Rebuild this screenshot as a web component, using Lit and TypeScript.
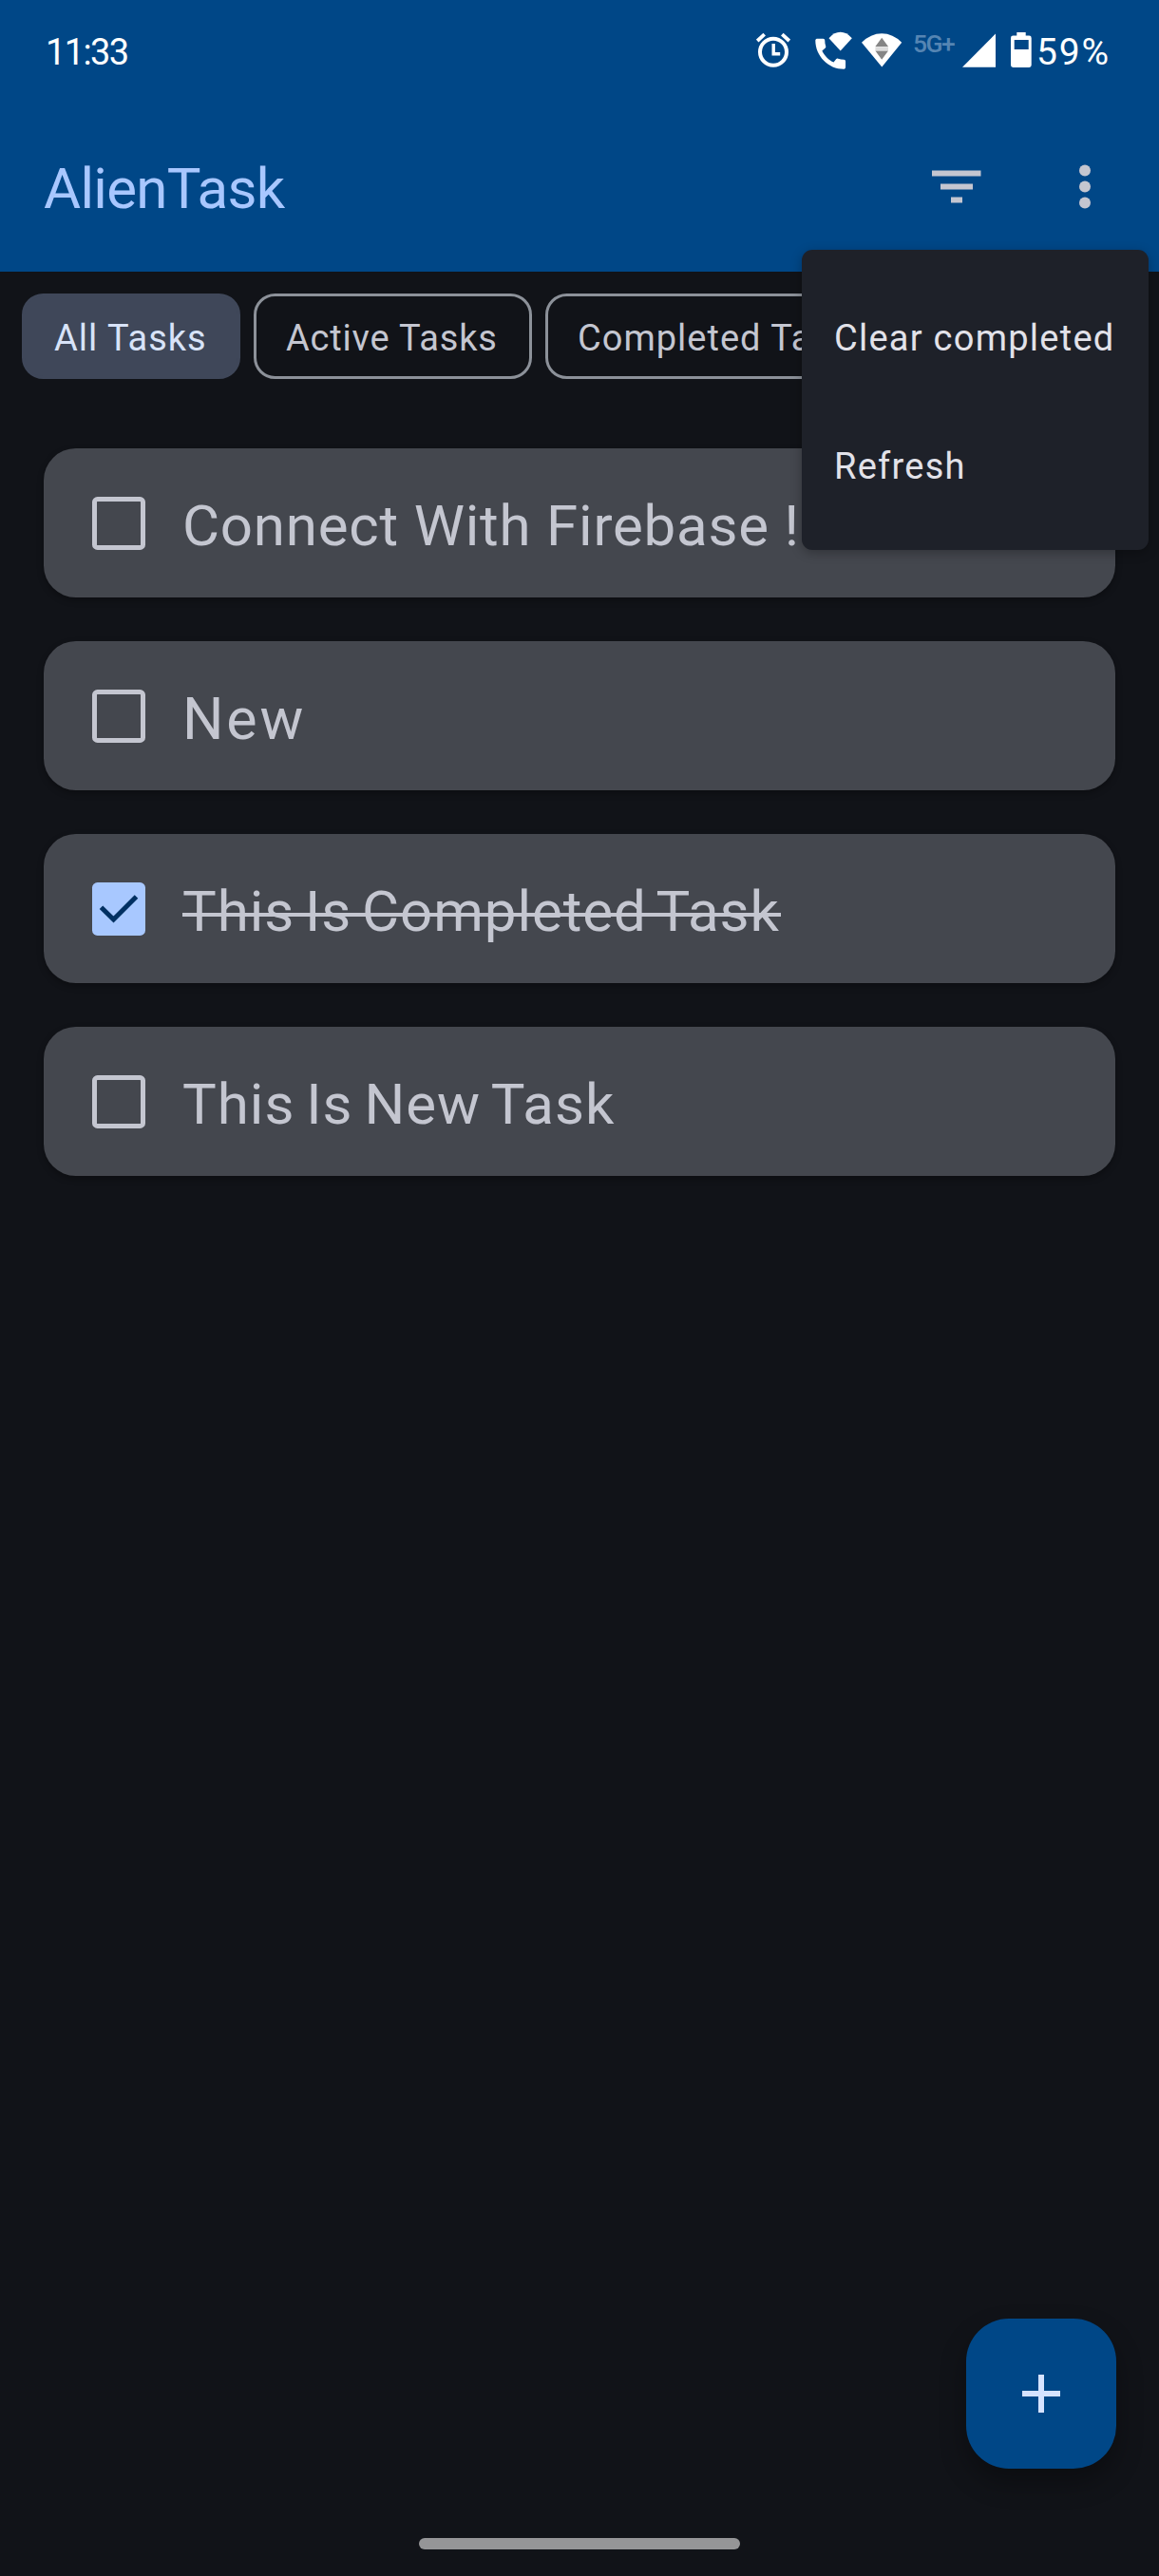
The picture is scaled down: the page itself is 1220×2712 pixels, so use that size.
import { LitElement, html, css, svg, nothing } from "lit";
import { customElement, property, state } from "lit/decorators.js";
import { classMap } from "lit/directives/class-map.js";

interface Task {
  title: string;
  done: boolean;
  tone: string;
}

@customElement("status-bar")
export class StatusBar extends LitElement {
  static styles = css`
    :host {
      display: flex;
      align-items: flex-start;
      height: 110px;
      box-sizing: border-box;
      padding: 33px 52px 0 48px;
      color: #fff;
    }
    .time {
      flex: 1;
      font-size: 38px;
      line-height: 44px;
      letter-spacing: -1.6px;
    }
    .icons {
      display: flex;
      align-items: flex-start;
    }
    svg {
      display: block;
      flex: none;
    }
    .alarm { margin-top: 1px; margin-right: 26px; }
    .call { margin-right: 9px; }
    .wifi { margin-top: 1px; margin-right: 11px; }
    .net {
      width: 52px;
      font-size: 26.5px;
      line-height: 26px;
      letter-spacing: -1.6px;
      font-weight: 500;
      color: #5585b3;
    }
    .signal { margin-top: 2px; margin-right: 16px; }
    .battery { margin-top: 1px; margin-right: 5px; }
    .percent {
      width: 77px;
      white-space: nowrap;
      font-size: 39px;
      line-height: 44px;
      font-weight: 370;
      letter-spacing: 1.8px;
    }
  `;

  render() {
    return html`
      <span class="time">11:33</span>
      <div class="icons">
        <svg class="alarm" width="36" height="38" viewBox="0 0 36 38" fill="none" stroke="#fff">
          <circle cx="18" cy="20.7" r="14" stroke-width="4" />
          <path d="M18.2 12v10.8h7" stroke-width="3.4" />
          <path d="M1.2 9 8.7 2.2M34.8 9 27.3 2.2" stroke-width="3.8" />
        </svg>
        <svg class="call" width="40" height="41" viewBox="0 0 40 41" fill="#fff">
          <path
            transform="translate(-5 2.3) scale(1.765 1.78)"
            d="M20.01 15.38c-1.23 0-2.42-.2-3.53-.56-.35-.12-.74-.03-1.01.24l-1.57 1.97c-2.83-1.35-5.48-3.9-6.89-6.83l1.95-1.66c.27-.28.35-.67.24-1.02-.37-1.11-.56-2.3-.56-3.53 0-.54-.45-.99-.99-.99H4.19C3.65 3 3 3.24 3 3.99 3 13.28 10.73 21 20.01 21c.71 0 .99-.63.99-1.18v-3.45c0-.54-.45-.99-.99-.99z"
          />
          <path d="M14.5 7.2Q20 .8 26.6.8T38.8 7.2L26.7 20.5z" />
        </svg>
        <svg class="wifi" width="43" height="37" viewBox="0 0 43 37">
          <path d="M0 10.7Q9.5 1.2 21.2 1.2T42.2 10.7L21.3 36.5z" fill="#fff" />
          <path d="M21.2 5.7 28 15H14.4zM14.4 19.5H28l-6.8 9.3z" fill="#858585" />
          <path d="M14.4 15.3H28v3.8H14.4z" fill="#dcdcdc" />
        </svg>
        <span class="net">5G+</span>
        <svg class="signal" width="35" height="36" viewBox="0 0 35 36">
          <path d="M0 35.8 35 .6v35.2z" fill="#fff" />
        </svg>
        <svg class="battery" width="22" height="37" viewBox="0 0 22 37">
          <path
            fill="#fff"
            fill-rule="evenodd"
            d="M6.3 0h9.4v3.5h3.6a2.4 2.4 0 0 1 2.4 2.4v28.7a2.4 2.4 0 0 1-2.4 2.4H2.4A2.4 2.4 0 0 1 0 34.6V5.9a2.4 2.4 0 0 1 2.4-2.4h3.9zM3.7 8v10h15V8z"
          />
        </svg>
        <span class="percent">59%</span>
      </div>
    `;
  }
}

@customElement("top-bar")
export class TopBar extends LitElement {
  static styles = css`
    :host {
      display: flex;
      align-items: center;
      height: 176px;
      box-sizing: border-box;
      padding: 0 44px 3px 46px;
    }
    .title {
      flex: 1;
      margin-top: 5px;
      font-size: 60px;
      line-height: 70px;
      letter-spacing: -0.7px;
      color: #a8c7ff;
    }
    svg {
      display: block;
    }
    .actions {
      display: flex;
      gap: 67px;
    }
  `;

  render() {
    return html`
      <span class="title">AlienTask</span>
      <div class="actions">
        <svg width="68" height="68" viewBox="0 0 68 68" fill="#c4c6d0">
          <path d="M8 16.5h51.5v6H8zM17 30.500h34v6H17zM28 44.500h12v6H28z" />
        </svg>
        <svg width="68" height="68" viewBox="0 0 68 68" fill="#c4c6d0">
          <circle cx="34" cy="16.5" r="6" />
          <circle cx="34" cy="33.5" r="6" />
          <circle cx="34" cy="50.5" r="6" />
        </svg>
      </div>
    `;
  }
}

@customElement("filter-chips")
export class FilterChips extends LitElement {
  @state() private selected = 0;

  static styles = css`
    :host {
      display: flex;
      gap: 14px;
      padding: 23px 0 0 23px;
      overflow: hidden;
    }
    .chip {
      flex: none;
      box-sizing: border-box;
      height: 90px;
      padding: 5px 31px 0;
      border: 3px solid #8c9199;
      border-radius: 22.5px;
      background: transparent;
      color: #c4c6d0;
      font: 450 38px/79px Roboto, "Noto Sans", sans-serif;
      letter-spacing: 1px;
      text-align: left;
      white-space: nowrap;
    }
    .chip:nth-child(1) { width: 230px; }
    .chip:nth-child(2) { width: 293px; letter-spacing: 0.8px; }
    .chip:nth-child(3) { width: 374px; }
    .selected {
      border-color: #3f4759;
      background: #3f4759;
      color: #d8e3f8;
    }
  `;

  render() {
    return ["All Tasks", "Active Tasks", "Completed Tasks"].map(
      (label, i) => html`<button
        class=${classMap({ chip: true, selected: i === this.selected })}
        @click=${() => (this.selected = i)}
      >${label}</button>`
    );
  }
}

@customElement("task-card")
export class TaskCard extends LitElement {
  @property({ attribute: false }) task!: Task;

  static styles = css`
    :host {
      display: flex;
      align-items: center;
      box-sizing: border-box;
      height: 157px;
      padding-left: 51px;
      border-radius: 33.75px;
      background: #44474e;
      box-shadow: 0 3px 7px rgba(0, 0, 0, 0.3);
      color: #c4c6d0;
    }
    .box {
      flex: none;
      box-sizing: border-box;
      width: 56px;
      height: 56px;
      margin-right: 39px;
      border: 5px solid #c4c6d0;
      border-radius: 5.6px;
    }
    .checked {
      border: 0;
      background: #a8c8ff;
    }
    svg {
      display: block;
    }
    .title {
      position: relative;
      margin-top: 7px;
      font-size: 60px;
      line-height: 70px;
      white-space: nowrap;
      letter-spacing: 0.8px;
    }
    .tight {
      letter-spacing: 0.95px;
      word-spacing: -5px;
    }
    .snug {
      letter-spacing: 1px;
      word-spacing: -4px;
    }
    .wide {
      font-size: 61px;
      letter-spacing: 2.8px;
    }
    .done::after {
      content: "";
      position: absolute;
      left: 0;
      right: -1px;
      top: 36px;
      height: 4px;
      background: #c4c6d0;
    }
  `;

  render() {
    const { title, done, tone } = this.task;
    return html`
      <span class=${classMap({ box: true, checked: done })}>
        ${done
          ? html`<svg width="56" height="56" viewBox="0 0 56 56">
              ${svg`<path d="M9.5 26.3 22.5 39 46.5 15" fill="none" stroke="#003062" stroke-width="5" />`}
            </svg>`
          : nothing}
      </span>
      <span class=${classMap({ title: true, done, [tone]: true })}>${title}</span>
    `;
  }
}

@customElement("overflow-menu")
export class OverflowMenu extends LitElement {
  static styles = css`
    :host {
      display: flex;
      flex-direction: column;
      box-sizing: border-box;
      width: 365px;
      height: 316px;
      padding: 26px 34px 20px;
      border-radius: 11.25px;
      background: #1e2129;
      box-shadow: 0 3px 12px rgba(0, 0, 0, 0.28);
      color: #e2e2e9;
    }
    .item {
      height: 135px;
      font-size: 38px;
      line-height: 135px;
      font-weight: 450;
      letter-spacing: 1.25px;
      white-space: nowrap;
    }
  `;

  render() {
    return html`
      <div class="item">Clear completed</div>
      <div class="item">Refresh</div>
    `;
  }
}

@customElement("app-root")
export class AppRoot extends LitElement {
  @state() private tasks: Task[] = [
    { title: "Connect With Firebase !", done: false, tone: "regular" },
    { title: "New", done: false, tone: "wide" },
    { title: "This Is Completed Task", done: true, tone: "tight" },
    { title: "This Is New Task", done: false, tone: "snug" },
  ];

  static styles = css`
    :host {
      display: block;
      font-family: Roboto, "Noto Sans", sans-serif;
    }
    .screen {
      position: relative;
      display: flex;
      flex-direction: column;
      width: 1220px;
      height: 2712px;
      overflow: hidden;
      background: #111318;
    }
    .header {
      background: #004787;
    }
    .tasks {
      flex: 1;
      display: flex;
      flex-direction: column;
      gap: 46px;
      padding: 73px 46px 0;
    }
    .menu {
      position: absolute;
      left: 844px;
      top: 263px;
    }
    .fab {
      position: absolute;
      right: 45px;
      bottom: 113px;
      display: grid;
      place-items: center;
      width: 158px;
      height: 158px;
      padding: 0;
      border: 0;
      border-radius: 45px;
      background: #004787;
      box-shadow: 0 14px 28px rgba(0, 0, 0, 0.32);
    }
    .nav {
      align-self: center;
      width: 338px;
      height: 12px;
      margin-bottom: 28px;
      border-radius: 6px;
      background: #959597;
    }
  `;

  render() {
    return html`
      <div class="screen">
        <div class="header">
          <status-bar></status-bar>
          <top-bar></top-bar>
        </div>
        <filter-chips></filter-chips>
        <div class="tasks">
          ${this.tasks.map((task) => html`<task-card .task=${task}></task-card>`)}
        </div>
        <div class="nav"></div>
        <overflow-menu class="menu"></overflow-menu>
        <button class="fab" aria-label="Add task">
          <svg width="40" height="40" viewBox="0 0 40 40" fill="#d6e3ff">
            <path d="M17 0h6v17h17v6H23v17h-6V23H0v-6h17z" />
          </svg>
        </button>
      </div>
    `;
  }
}
